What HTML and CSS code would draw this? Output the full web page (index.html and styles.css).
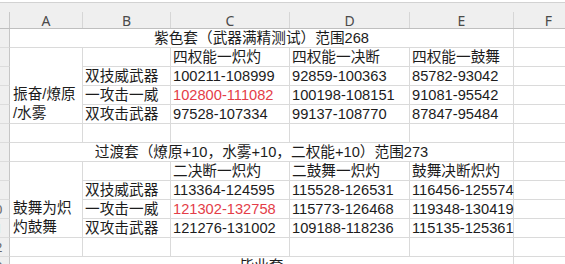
FILE: index.html
```html
<!DOCTYPE html>
<html lang="zh-CN">
<head>
<meta charset="utf-8">
<link rel="stylesheet" href="styles.css">
</head>
<body>
<div class="sheet">
  <div class="topbar"></div>
  <div class="grid">
    <div class="hd corner"><div class="hd-in"></div></div>
    <div class="hd"><div class="hd-in">A</div></div>
    <div class="hd"><div class="hd-in">B</div></div>
    <div class="hd"><div class="hd-in">C</div></div>
    <div class="hd"><div class="hd-in">D</div></div>
    <div class="hd"><div class="hd-in">E</div></div>
    <div class="hd"><div class="hd-in">F</div></div>

    <div class="rh"><span>1</span></div>
    <div class="c title">紫色套（武器满精测试）范围268</div>
    <div class="c"></div>

    <div class="rh"><span>2</span></div>
    <div class="c merged">振奋/燎原<br>/水雾</div>
    <div class="c"></div>
    <div class="c">四权能一炽灼</div>
    <div class="c">四权能一决断</div>
    <div class="c">四权能一鼓舞</div>
    <div class="c"></div>

    <div class="rh"><span>3</span></div>
    <div class="c">双技威武器</div>
    <div class="c">100211-108999</div>
    <div class="c">92859-100363</div>
    <div class="c">85782-93042</div>
    <div class="c"></div>

    <div class="rh"><span>4</span></div>
    <div class="c">一攻击一威</div>
    <div class="c red">102800-111082</div>
    <div class="c">100198-108151</div>
    <div class="c">91081-95542</div>
    <div class="c"></div>

    <div class="rh"><span>5</span></div>
    <div class="c">双攻击武器</div>
    <div class="c">97528-107334</div>
    <div class="c">99137-108770</div>
    <div class="c">87847-95484</div>
    <div class="c"></div>

    <div class="rh"><span>6</span></div>
    <div class="c"></div>
    <div class="c"></div>
    <div class="c"></div>
    <div class="c"></div>
    <div class="c"></div>
    <div class="c"></div>

    <div class="rh"><span>7</span></div>
    <div class="c title">过渡套（燎原+10，水雾+10，二权能+10）范围273</div>
    <div class="c"></div>

    <div class="rh"><span>8</span></div>
    <div class="c merged">鼓舞为炽<br>灼鼓舞</div>
    <div class="c"></div>
    <div class="c">二决断一炽灼</div>
    <div class="c">二鼓舞一炽灼</div>
    <div class="c">鼓舞决断炽灼</div>
    <div class="c"></div>

    <div class="rh"><span>9</span></div>
    <div class="c">双技威武器</div>
    <div class="c">113364-124595</div>
    <div class="c">115528-126531</div>
    <div class="c">116456-125574</div>
    <div class="c"></div>

    <div class="rh"><span>10</span></div>
    <div class="c">一攻击一威</div>
    <div class="c red">121302-132758</div>
    <div class="c">115773-126468</div>
    <div class="c">119348-130419</div>
    <div class="c"></div>

    <div class="rh"><span>11</span></div>
    <div class="c">双攻击武器</div>
    <div class="c">121276-131002</div>
    <div class="c">109188-118236</div>
    <div class="c">115135-125361</div>
    <div class="c"></div>

    <div class="rh"><span>12</span></div>
    <div class="c"></div>
    <div class="c"></div>
    <div class="c"></div>
    <div class="c"></div>
    <div class="c"></div>
    <div class="c"></div>

    <div class="rh"><span>13</span></div>
    <div class="c title">毕业套</div>
    <div class="c"></div>
  </div>
</div>
</body>
</html>
```

FILE: styles.css
```css
html, body {
  margin: 0;
  padding: 0;
  background: #ffffff;
  overflow: hidden;
}

.sheet {
  width: 565px;
  height: 264px;
  overflow: hidden;
  font-family: "Liberation Sans", "Noto Sans CJK SC", sans-serif;
}

.topbar {
  height: 3px;
  box-sizing: border-box;
  background: #ffffff;
  border-bottom: 1px solid #d2d2d2;
}

.grid {
  display: grid;
  grid-template-columns: 10px 73px 88px 119px 120px 104px 70px;
  grid-template-rows: 26px;
  grid-auto-rows: 19px;
  width: 584px;
}

.hd {
  background: #efefef;
  box-sizing: border-box;
  border-bottom: 1px solid #bfbfbf;
  padding-top: 9px;
}

.hd-in {
  height: 16px;
  box-sizing: border-box;
  border-right: 1px solid #d6d6d6;
  padding-top: 2px;
  text-align: center;
  font-family: "Noto Sans", "Liberation Sans", sans-serif;
  font-size: 14px;
  color: #4a4a4a;
  line-height: 14px;
}

.corner .hd-in {
  border-right: 1px solid #c8c8c8;
}

.rh {
  background: #efefef;
  box-sizing: border-box;
  border-right: 1px solid #c6c6c6;
  border-bottom: 1px solid #dcdcdc;
  overflow: hidden;
  display: flex;
  align-items: center;
}

.rh span {
  flex: none;
  width: 30px;
  margin-left: -20px;
  text-align: center;
  font-family: "Noto Sans", "Liberation Sans", sans-serif;
  font-size: 13px;
  color: #666666;
  line-height: 18px;
}

.c {
  box-sizing: border-box;
  border-right: 1px solid #dadada;
  border-bottom: 1px solid #dadada;
  display: flex;
  align-items: flex-end;
  padding: 0 2px 0 2px;
  font-size: 14.67px;
  line-height: 17px;
  color: #1c1c1c;
  white-space: nowrap;
}

.title {
  grid-column: span 5;
  justify-content: center;
}

.merged {
  grid-row: span 4;
  padding-left: 3px;
  padding-bottom: 0;
  line-height: 19px;
}

.red {
  color: #e43d48;
}
```
